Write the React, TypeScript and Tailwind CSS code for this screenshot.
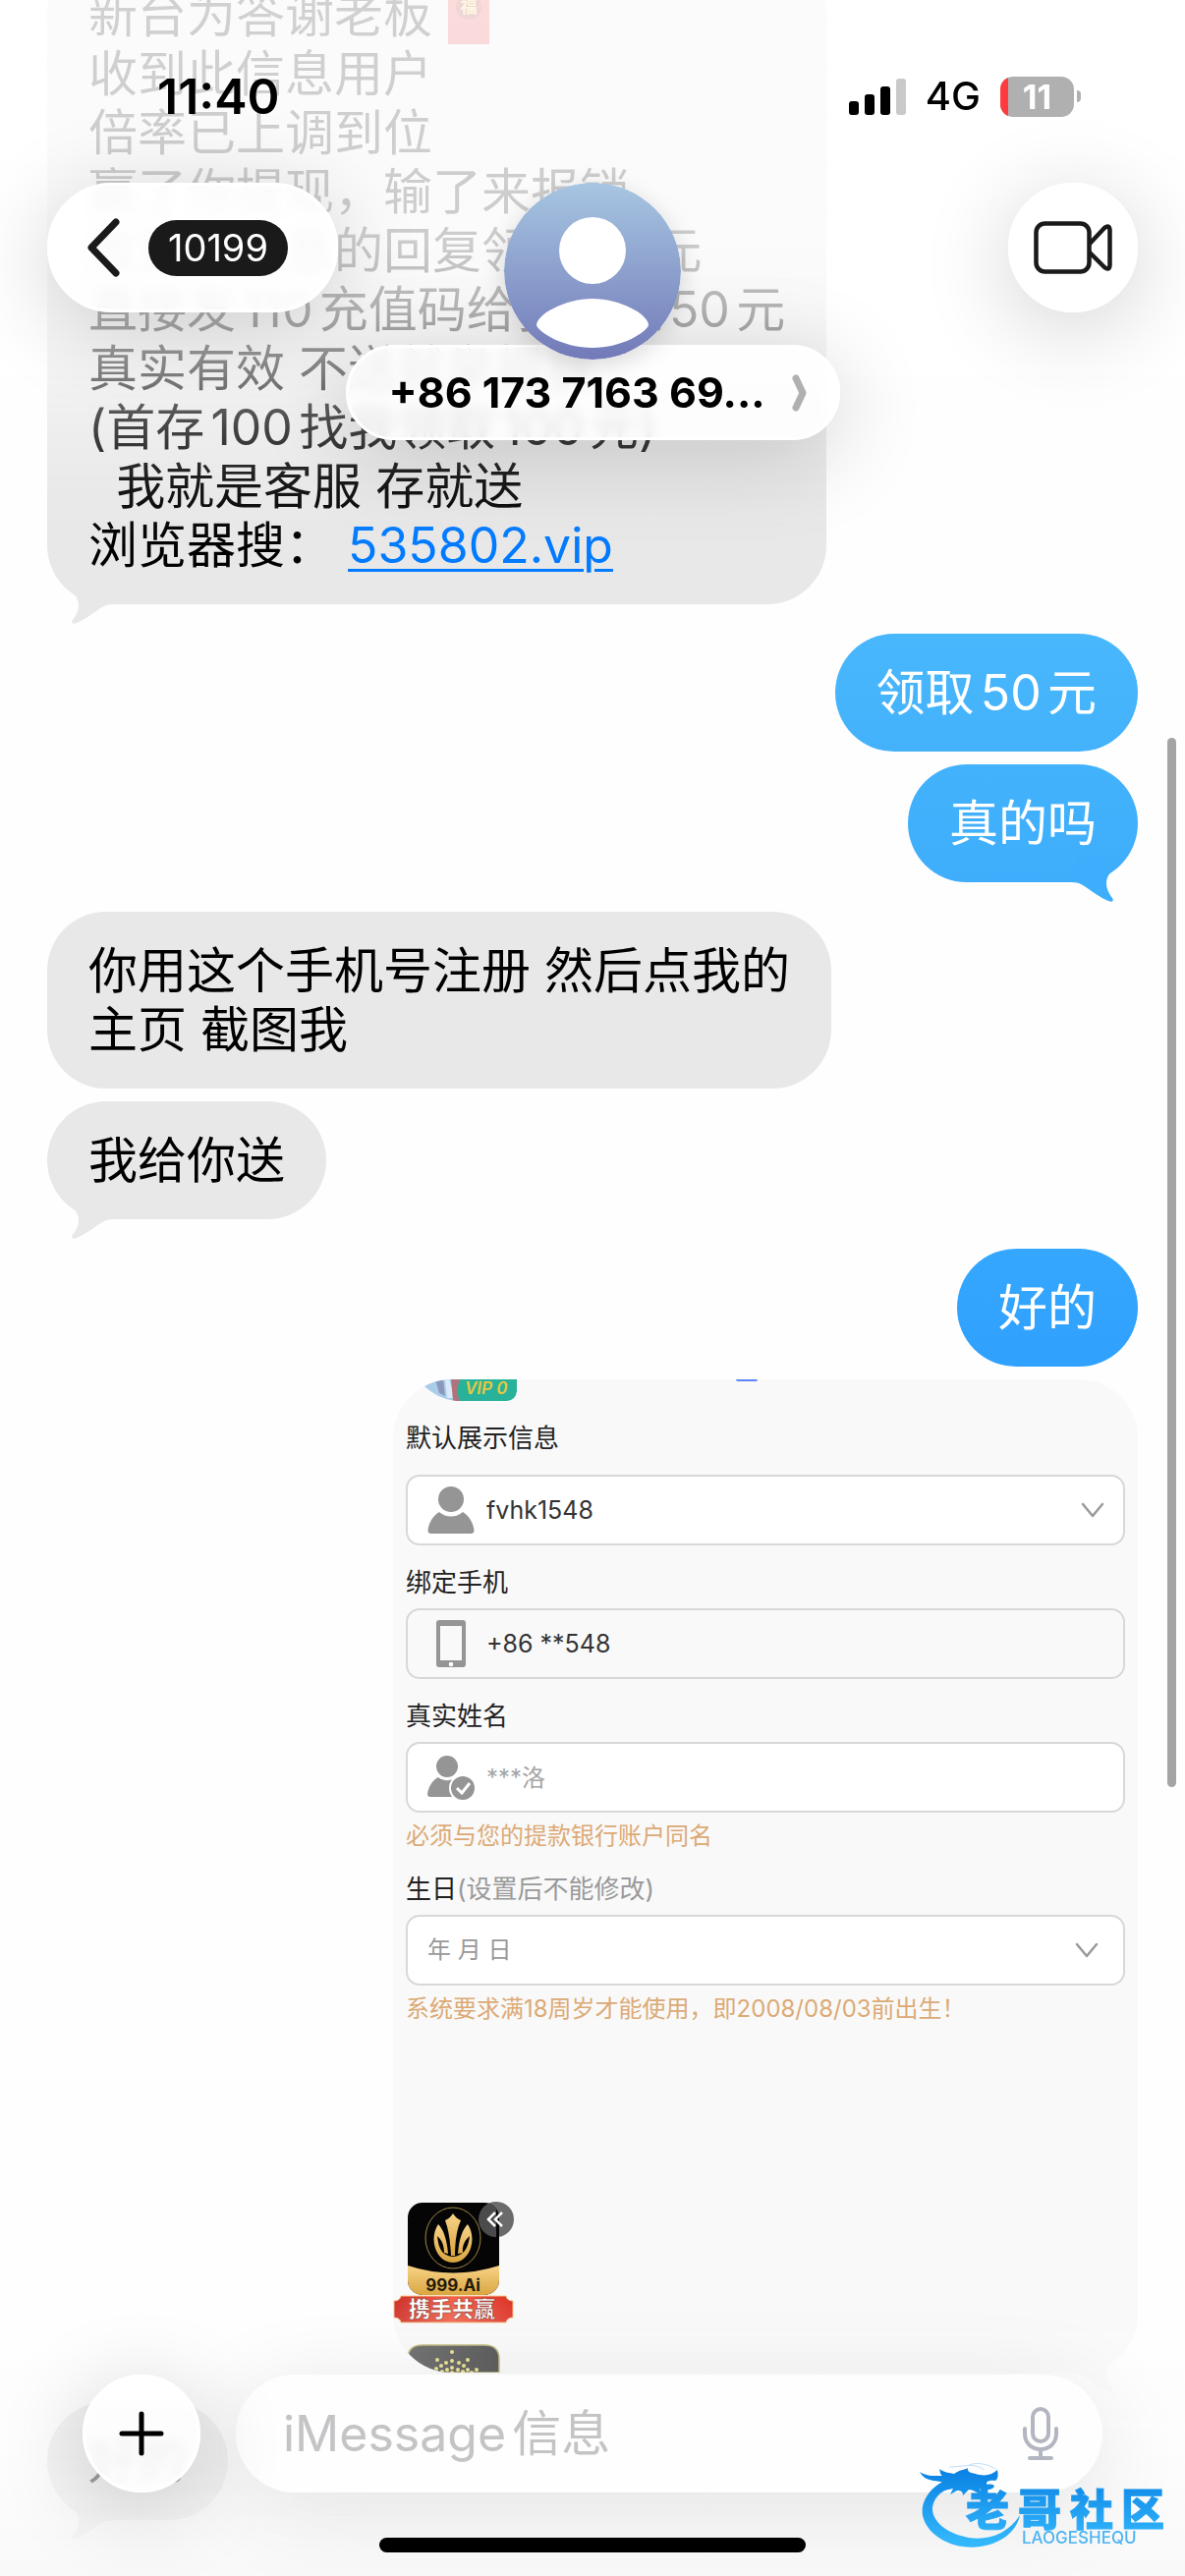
import { useState } from "react";
import type { ReactNode } from "react";

const Tail = ({ className }: { className: string }) => (
  <svg viewBox="0 0 70 50" className={`absolute -bottom-[21px] h-[50px] w-[70px] ${className}`} fill="currentColor" aria-hidden="true">
    <path d="M16 6 C28 18 32 23 32 30 C32 36 29 41 26 45 C24 48 26 50 30 48 C44 42 52 33 60 30 C63 29 66 29 70 29 L60 0 Z" />
  </svg>
);

const Received = ({ children, tail }: { children: ReactNode; tail?: boolean }) => (
  <div className="relative w-fit max-w-[810px] self-start rounded-[60px] bg-[#e8e8e9] px-[42px] py-[30px] text-black">
    {children}
    {tail && <Tail className="left-0 text-[#e8e8e9]" />}
  </div>
);

const Sent = ({ children, tail, color }: { children: ReactNode; tail?: boolean; color: string }) => (
  <div className={`relative w-fit max-w-[810px] self-end rounded-[60px] px-[42px] py-[30px] text-white ${color}`}>
    {children}
    {tail && <Tail className="right-0 -scale-x-100 text-[#3eaefc]" />}
  </div>
);

const RedEnvelope = () => (
  <svg viewBox="0 0 42 60" className="ml-4 inline-block h-[60px] w-[42px] align-top" aria-hidden="true">
    <rect width="42" height="60" fill="#e8393c" />
    <circle cx="21" cy="22" r="13" fill="#a3231f" />
    <text x="21" y="28" textAnchor="middle" fontSize="17" fontWeight="700" fill="#ffd45e" fontFamily="Noto Sans CJK SC, sans-serif">
      福
    </text>
  </svg>
);

const Chevron = ({ className }: { className: string }) => (
  <svg viewBox="0 0 24 16" className={`pointer-events-none absolute top-1/2 h-4 w-6 -translate-y-1/2 ${className}`} fill="none" stroke="#999" strokeWidth="2.5" strokeLinecap="round" strokeLinejoin="round" aria-hidden="true">
    <path d="M2 2 L12 14 L22 2" />
  </svg>
);

const PersonIcon = () => (
  <svg viewBox="0 0 48 48" className="h-12 w-12" fill="#959595" aria-hidden="true">
    <ellipse cx="24" cy="13" rx="13" ry="13" />
    <path d="M12 26 C19 32 29 32 36 26 C43 30 47 38 47.500 45 Q47.500 48 44 48 H4 Q.5 48 .5 45 C1 38 5 30 12 26 Z" />
  </svg>
);

const PhoneIcon = () => (
  <svg viewBox="0 0 48 48" className="h-12 w-12" aria-hidden="true">
    <path fill="#959595" fillRule="evenodd" d="M12 0 H36 Q39 0 39 3 V45 Q39 48 36 48 H12 Q9 48 9 45 V3 Q9 0 12 0 Z M13 6 V41 H35 V6 Z" />
    <circle cx="24" cy="45" r="2.300" fill="#fff" />
  </svg>
);

const VerifiedIcon = () => (
  <svg viewBox="0 0 48 48" className="h-12 w-12" aria-hidden="true">
    <circle cx="20" cy="13" r="11" fill="#959595" />
    <path d="M11 24 C16 28 23 28 28 25 L25 44 H3 Q0 44 0 41 C1 34 5 27 11 24 Z" fill="#959595" />
    <circle cx="36" cy="35" r="14" fill="#fff" />
    <circle cx="36" cy="35" r="12" fill="#959595" />
    <path d="M30 35 L35 40 L43 30" fill="none" stroke="#fff" strokeWidth="3" />
  </svg>
);

const VipBadge = () => (
  <svg viewBox="0 0 100 22" className="ml-[31px] h-[22px] w-[100px]" aria-hidden="true">
    <defs>
      <clipPath id="face">
        <path d="M0 0 H60 V22 H34 C20 21 8 14 0 6 Z" />
      </clipPath>
    </defs>
    <g clipPath="url(#face)">
      <rect width="60" height="22" fill="#a9cdea" />
      <path d="M12 0 L16 14 L22 17 L20 0 Z" fill="#8b98bb" />
      <path d="M22 0 H26 L32 19 H24 Z" fill="#d9eafa" />
      <path d="M28 0 H40 V22 H30 Z" fill="#b0747c" />
    </g>
    <path d="M37 0 H95 V12 Q94 21 85 22 H37 C34 16 34 8 37 0 Z" fill="#27b299" />
    <text x="42" y="15" fontSize="17" fontWeight="600" fontStyle="italic" fill="#e8c93f" fontFamily="Inter, sans-serif">VIP 0</text>
  </svg>
);

const dots = [
  [60, 155], [45, 163], [76, 163], [60, 164], [54, 166], [67, 166], [49, 169], [72, 169], [60, 171],
  [44, 172], [55, 173], [66, 173], [85, 173], [76, 173], [36, 174], [50, 175], [71, 175], [80, 176], [60, 176],
];

const AppIcons = () => (
  <svg viewBox="0 0 126 176" className="mt-[178px] block h-[176px] w-[126px]" aria-hidden="true">
    <defs>
      <linearGradient id="gold" x1="0" y1="0" x2="0" y2="1">
        <stop offset="0" stopColor="#f8d488" />
        <stop offset="1" stopColor="#d9a43f" />
      </linearGradient>
      <linearGradient id="red" x1="0" y1="0" x2="1" y2="0">
        <stop offset="0" stopColor="#cf3028" />
        <stop offset=".5" stopColor="#f2614a" />
        <stop offset="1" stopColor="#dc3227" />
      </linearGradient>
      <linearGradient id="slate" x1="0" y1="0" x2="1" y2="1">
        <stop offset="0" stopColor="#555" />
        <stop offset="1" stopColor="#1c1c1c" />
      </linearGradient>
      <clipPath id="tile">
        <rect x="15" y="3" width="93" height="94" rx="15" />
      </clipPath>
    </defs>
    <circle cx="105" cy="20" r="18" fill="#6b6b6b" />
    <g clipPath="url(#tile)">
      <rect x="15" y="3" width="93" height="94" fill="#050505" />
      <path d="M15 67 Q61 82 108 67 V98 H15 Z" fill="url(#gold)" />
      <path d="M87 20 A18 18 0 0 1 105 2 V38 A18 18 0 0 1 87 20 Z" fill="#4b4b4b" />
    </g>
    <ellipse cx="61" cy="39" rx="28" ry="31" fill="none" stroke="#a08648" strokeWidth="1" />
    <path d="M61 14 Q64 19 69 21 Q63 34 63 57 H59 Q58 34 53 21 Q58 19 61 14 Z" fill="url(#gold)" />
    <path d="M46 25 C38 37 41 55 53 62 Q61 66 69 62 C81 55 84 37 76 25 C70 31 67 42 66 55 L71 54 C70 47 73 41 78 37 C77 46 74 53 68 56 Q61 60 54 56 C48 53 46 46 45 37 C50 41 52 47 52 54 L56 55 C55 42 52 31 46 25 Z" fill="url(#gold)" />
    <path d="M104 13 L97 20 L104 27 M111 13 L104 20 L111 27" fill="none" stroke="#fff" strokeWidth="2.500" />
    <text x="61" y="93" textAnchor="middle" fontSize="17" fontWeight="700" fill="#241a08" fontFamily="Inter, sans-serif">999.Ai</text>
    <path d="M8 98 H115 Q116 103 122 103 V120 Q116 120 115 125 H8 Q7 120 1 120 V103 Q7 103 8 98 Z" fill="url(#red)" stroke="#f3c489" strokeWidth="1" />
    <text x="60" y="119" textAnchor="middle" fontSize="22" fontWeight="900" fill="#fff" stroke="#8c3a30" strokeWidth="0.6" fontFamily="Noto Sans CJK SC, sans-serif">携手共赢</text>
    <path d="M15 176 V162 Q15 148 30 148 H93 Q108 148 108 162 V176 Z" fill="url(#slate)" stroke="#b3a864" strokeWidth="1.500" />
    {dots.map(([cx, cy], i) => (
      <circle key={i} cx={cx} cy={cy} r="2" fill="#e3d873" />
    ))}
  </svg>
);

const field = "relative flex h-[72px] items-center gap-3 rounded-[14px] border-2 border-[#d8d8d8] pl-5";
const label = "mt-[18px] mb-[6px] block text-[26px] leading-[40px] text-[#222]";
const hint = "mt-2 text-2xl leading-8 text-[#dcaa76]";

const ProfileCard = () => {
  const [account, setAccount] = useState("fvhk1548");
  const [phone, setPhone] = useState("+86 **548");
  const [name, setName] = useState("");

  return (
    <div className="relative w-[69%] max-w-[758px] self-end [text-autospace:no-autospace]">
      <form className="overflow-hidden rounded-[60px] bg-[#f9f9f9]">
        <div className="relative">
          <VipBadge />
          <span className="absolute top-0 left-[46%] h-[2px] w-[22px] rounded-b bg-[#5b86f7]" />
        </div>
        <div className="px-[13px]">
          <label htmlFor="account" className="mt-[18px] mb-[17px] block text-[26px] leading-[40px] text-[#222]">
            默认展示信息
          </label>
          <div className={`${field} bg-white`}>
            <PersonIcon />
            <select
              id="account"
              value={account}
              onChange={(e) => setAccount(e.target.value)}
              className="h-full flex-1 appearance-none bg-transparent text-[25px] text-[#333] outline-none"
            >
              <option value="fvhk1548">fvhk1548</option>
            </select>
            <Chevron className="right-[19px]" />
          </div>

          <label htmlFor="phone" className={label}>绑定手机</label>
          <div className={field}>
            <PhoneIcon />
            <input
              id="phone"
              type="tel"
              value={phone}
              onChange={(e) => setPhone(e.target.value)}
              className="h-full min-w-0 flex-1 bg-transparent text-[25px] text-[#333] outline-none"
            />
          </div>

          <label htmlFor="name" className={label}>真实姓名</label>
          <div className={`${field} bg-white`}>
            <VerifiedIcon />
            <input
              id="name"
              type="text"
              value={name}
              placeholder="***洛"
              onChange={(e) => setName(e.target.value)}
              className="h-full min-w-0 flex-1 bg-transparent text-2xl outline-none placeholder:text-[#a5a5a5]"
            />
          </div>
          <p className={hint}>必须与您的提款银行账户同名</p>

          <label htmlFor="birthday" className={label}>
            生日<span className="text-[#999]">(设置后不能修改)</span>
          </label>
          <div className={`${field} bg-white`}>
            <select id="birthday" className="h-full flex-1 appearance-none bg-transparent text-2xl text-[#999] outline-none">
              <option>年 月 日</option>
            </select>
            <Chevron className="right-[25px]" />
          </div>
          <p className={hint}>系统要求满18周岁才能使用，即2008/08/03前出生！</p>
        </div>
        <AppIcons />
      </form>
      <Tail className="right-0 -scale-x-100 text-[#f9f9f9]" />
    </div>
  );
};

const StatusBar = () => (
  <div className="flex h-[60px] items-center justify-between pr-[106px] pl-[160px]">
    <span className="text-[50px] font-semibold">11:40</span>
    <div className="flex items-center">
      <svg viewBox="0 0 58 37" className="h-[37px] w-[58px]" aria-hidden="true">
        <rect x="0" y="23" width="10" height="14" rx="3" />
        <rect x="16" y="16" width="10" height="21" rx="3" />
        <rect x="32" y="8" width="10" height="29" rx="3" />
        <rect x="48" y="0" width="10" height="37" rx="3" fill="#c9c9c9" />
      </svg>
      <span className="ml-5 text-[40px] font-medium">4G</span>
      <div className="relative ml-5 flex h-[41px] w-[75px] items-center justify-center overflow-hidden rounded-[13px] bg-[#b0b0b0]">
        <span className="absolute inset-y-0 left-0 w-2 bg-[#ff3b3f]" />
        <span className="text-[34px] font-bold text-white">11</span>
      </div>
      <span className="ml-[3px] h-3 w-1 rounded-r-full bg-[#b0b0b0]" />
    </div>
  </div>
);

const glass = "border-[3px] border-white bg-white/85 backdrop-blur-[6px] shadow-[0_16px_90px_rgba(0,0,0,0.18)]";

const Header = () => (
  <header className="fixed inset-x-0 top-0 z-10">
    <div className="pointer-events-none absolute inset-x-0 top-0 h-[560px] bg-[linear-gradient(to_bottom,rgba(255,255,255,0.82)_0px,rgba(255,255,255,0.8)_250px,rgba(255,255,255,0.7)_315px,rgba(255,255,255,0.53)_375px,rgba(255,255,255,0.27)_435px,rgba(255,255,255,0.09)_495px,rgba(255,255,255,0)_560px)]" />
    <div className="relative pt-[68px]">
      <StatusBar />
      <div className="mt-[58px] grid grid-cols-[1fr_auto_1fr] items-start px-12">
        <button type="button" aria-label="返回" className={`flex h-[132px] w-[296px] items-center justify-self-start rounded-full pl-[38px] ${glass}`}>
          <svg viewBox="0 0 34 60" className="h-[60px] w-[34px]" fill="none" stroke="#1a1a1a" strokeWidth="7" strokeLinecap="round" strokeLinejoin="round" aria-hidden="true">
            <path d="M29 4 L4 30 L29 56" />
          </svg>
          <span className="ml-7 flex h-[57px] w-[142px] items-center justify-center rounded-full bg-[#1a1a1a] text-[38px] text-white">10199</span>
        </button>

        <div className="flex flex-col items-center">
          <svg viewBox="0 0 180 180" className="relative z-10 h-[180px] w-[180px] rounded-full shadow-[0_6px_24px_rgba(0,0,0,0.15)]" role="img" aria-label="头像">
            <defs>
              <linearGradient id="avatar" x1="0" y1="0" x2="0" y2="1">
                <stop offset="0" stopColor="#a7c6e2" />
                <stop offset="1" stopColor="#727ab8" />
              </linearGradient>
            </defs>
            <circle cx="90" cy="90" r="90" fill="url(#avatar)" />
            <circle cx="90" cy="69" r="34" fill="#fff" />
            <path d="M33 145 C33 134 62 118 90 118 C118 118 147 134 147 145 C145 152 120 168 90 168 C60 168 35 152 33 145 Z" fill="#fff" />
          </svg>
          <button type="button" className={`-mt-[15px] flex h-[97px] w-[503px] items-center justify-between rounded-full pr-[30px] pl-[41px] ${glass}`}>
            <span className="text-[43px] font-bold">+86 173 7163 69...</span>
            <svg viewBox="0 0 16 40" className="h-10 w-4" fill="none" stroke="#b0b0b0" strokeWidth="7" strokeLinecap="round" strokeLinejoin="round" aria-hidden="true">
              <path d="M4 5 L11 20 L4 35" />
            </svg>
          </button>
        </div>

        <button type="button" aria-label="视频通话" className={`flex h-[132px] w-[132px] items-center justify-center justify-self-end rounded-full ${glass}`}>
          <svg viewBox="0 0 80 54" className="h-[54px] w-20" fill="none" stroke="#1a1a1a" strokeWidth="4.500" strokeLinejoin="round" aria-hidden="true">
            <rect x="2.500" y="2.500" width="54" height="49" rx="9" />
            <path d="M57 23 L72 7 Q77 3 77.500 9 V45 Q77 51 72 47 L57 32" />
          </svg>
        </button>
      </div>
    </div>
  </header>
);

const Composer = () => {
  const [text, setText] = useState("");

  return (
    <footer className="fixed inset-x-0 bottom-0 z-10 bg-[linear-gradient(to_bottom,rgba(252,252,252,0)_0%,rgba(252,252,252,0.5)_45%,rgba(248,248,248,0.85)_100%)] pt-20 pb-6">
      <div className="flex items-center gap-9 px-[84px]">
        <button type="button" aria-label="添加" className={`flex h-[120px] w-[120px] shrink-0 items-center justify-center rounded-full ${glass}`}>
          <svg viewBox="0 0 46 46" className="h-[46px] w-[46px]" stroke="#000" strokeWidth="5" strokeLinecap="round" aria-hidden="true">
            <path d="M23 3 V43 M3 23 H43" />
          </svg>
        </button>
        <div className="flex h-[120px] min-w-0 flex-1 items-center rounded-full bg-[#fefefe] pr-[44px] pl-[48px] shadow-[0_16px_90px_rgba(0,0,0,0.1)]">
          <input
            type="text"
            aria-label="信息"
            placeholder="iMessage信息"
            value={text}
            onChange={(e) => setText(e.target.value)}
            className="h-full min-w-0 flex-1 bg-transparent text-[50px] outline-none placeholder:text-[#c4c4c6]"
          />
          <button type="button" aria-label="听写">
            <svg viewBox="0 0 38 56" className="h-14 w-[38px]" fill="none" stroke="#b3b6c0" strokeWidth="4" strokeLinecap="round" aria-hidden="true">
              <rect x="11" y="3" width="16" height="33" rx="8" />
              <path d="M3 23 V28 C3 38 10 44 19 44 C28 44 35 38 35 28 V23 M19 44 V53 M8 53 H30" />
            </svg>
          </button>
        </div>
      </div>
      <div className="mx-auto mt-[46px] h-[15px] w-[36%] rounded-full bg-black" />
    </footer>
  );
};

const Watermark = () => (
  <svg viewBox="0 0 252 90" className="pointer-events-none fixed right-[18px] bottom-[26px] z-20 h-[90px] w-[252px]" role="img" aria-label="老哥社区">
    <defs>
      <linearGradient id="water" x1="0" y1="0" x2="0" y2="90" gradientUnits="userSpaceOnUse">
        <stop offset=".1" stopColor="#0a82e4" />
        <stop offset=".9" stopColor="#33b7fb" />
      </linearGradient>
    </defs>
    <g fill="url(#water)">
      <path d="M39 15 C12 19 -2 42 4 58 C10 76 35 90 62 86 C82 83 98 72 102 54 C90 73 70 80 50 77 C27 73 12 60 13 46 C15 34 25 26 39 26 Z" />
      <path d="M0 10 C8 15 16 14 23 14 C20 11 21 9 20 7 C25 11 31 11 35 12 C40 8 46 8 49 6 C48 10 52 11 57 12 C66 15 74 13 79 8 C80 13 80 17 77 19 C70 18 66 21 69 23 C73 22 76 23 76 25 C73 29 67 29 61 27 L63 33 C57 31 54 28 50 28 L44 34 C44 30 42 29 38 29 L31 33 L34 27 L24 29 L28 22 C22 18 6 22 0 10 Z" />
    </g>
    <path d="M30 5 C44 5 54 0 66 8 M50 3 C61 -1 74 4 78 8" fill="none" stroke="#bfdffa" strokeWidth="1" />
    <g fill="url(#water)" stroke="url(#water)" strokeWidth="1" fontFamily="Noto Sans CJK SC, sans-serif" fontSize="44" fontWeight="900" textAnchor="middle">
      <text x="69" y="65">老</text>
      <text x="122" y="65">哥</text>
      <text x="175" y="65">社</text>
      <text x="227" y="65">区</text>
    </g>
    <text x="104" y="83" fontSize="17" fontWeight="500" fill="#4cb4f2" fontFamily="Inter, sans-serif">LAOGESHEQU</text>
  </svg>
);

const App = () => {
  return (
    <div className="relative min-h-screen overflow-hidden bg-[#fefefe] font-['Inter','Noto_Sans_CJK_SC',sans-serif] text-black [text-autospace:normal]">
      <Header />

      <main className="-mt-[45px] flex flex-col gap-[30px] px-12 pb-8 text-[50px] leading-[60px]">
        <Received tail>
          <p>
            新台为答谢老板
            <RedEnvelope />
          </p>
          <p>收到此信息用户</p>
          <p>倍率已上调到位</p>
          <p>赢了你提现，输了来报销</p>
          <p>收到此信息的回复领取50元</p>
          <p>直接发110充值码给我领取50元</p>
          <p>真实有效 不送就举报我</p>
          <p>(首存100找我领取100元)</p>
          <p className="whitespace-pre">{"  我就是客服 存就送"}</p>
          <p>
            浏览器搜：{" "}
            <a href="#535802" className="text-[#007aff] underline decoration-[3px] underline-offset-[6px]">
              535802.vip
            </a>
          </p>
        </Received>

        <div className="flex flex-col gap-[13px]">
          <Sent color="bg-linear-to-b from-[#49b7fc] to-[#44b2fb]">领取50元</Sent>
          <Sent color="bg-linear-to-b from-[#43b2fc] to-[#3eaefc]" tail>真的吗</Sent>
        </div>

        <div className="flex flex-col gap-[13px]">
          <Received>
            你用这个手机号注册 然后点我的
            <br />
            主页 截图我
          </Received>
          <Received tail>我给你送</Received>
        </div>

        <div className="flex flex-col gap-[13px]">
          <Sent color="bg-linear-to-b from-[#35a7fe] to-[#2fa1fe]">好的</Sent>
          <ProfileCard />
        </div>

        <Received tail>好的</Received>
      </main>

      <span className="fixed top-[751px] right-[9px] z-10 h-[1068px] w-[9px] rounded-full bg-[#a4a4a4]" />
      <Composer />
      <Watermark />
    </div>
  );
};

export default App;
